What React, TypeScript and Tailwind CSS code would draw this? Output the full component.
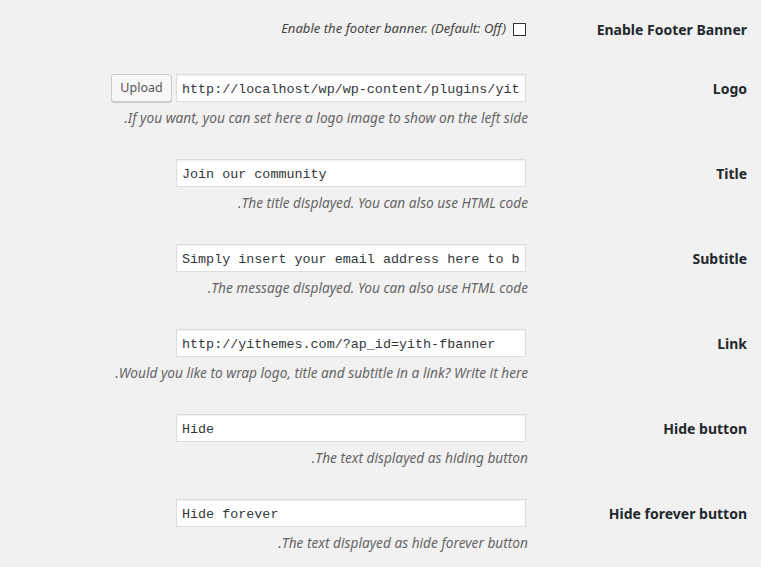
import React from "react";

const labelFont = { fontFamily: '"Noto Sans", "Open Sans", sans-serif' };

function Row({
  label,
  children,
  desc,
}: {
  label: string;
  children: React.ReactNode;
  desc?: string;
}) {
  return (
    <div className="flex h-[85px]">
      <div className="flex-1 flex flex-col items-end pt-[15px] pr-[35px]">
        {children}
        {desc && (
          <p
            dir="rtl"
            className="mt-[4px] mr-[-2px] leading-[24px] text-[13.7px] italic text-[#666] text-right"
            style={labelFont}
          >
            {desc}
          </p>
        )}
      </div>
      <div
        className="w-[200px] pt-[19px] pr-[14px] text-right text-[14px] font-bold leading-[22px] text-[#23282d]"
        style={labelFont}
      >
        {label}
      </div>
    </div>
  );
}

function TextInput({ value }: { value: string }) {
  return (
    <input
      dir="ltr"
      readOnly
      value={value}
      className="w-[350px] h-[28px] bg-white border border-[#dddddd] shadow-[inset_0_1px_2px_rgba(0,0,0,0.07)] pl-[5px] pr-[5px] pt-[2px] text-[13.4px] text-[#32373c] outline-none"
      style={{ fontFamily: '"Liberation Mono", "DejaVu Sans Mono", monospace' }}
    />
  );
}

export default function App() {
  return (
    <div className="w-[761px] h-[567px] bg-[#f1f1f1] overflow-hidden">
      <div className="flex h-[59px]">
        <div className="flex-1 flex items-start justify-end pt-[15px] pr-[35px]">
          <div className="flex items-center h-[28px] gap-[7px]">
            <span
              className="text-[13.1px] italic text-[#444]"
              style={labelFont}
            >
              Enable the footer banner. (Default: Off)
            </span>
            <span className="block w-[13px] h-[13px] border border-[#333] bg-white" />
          </div>
        </div>
        <div
          className="w-[200px] pt-[19px] pr-[14px] text-right text-[14px] font-bold leading-[22px] text-[#23282d]"
          style={labelFont}
        >
          Enable Footer Banner
        </div>
      </div>

      <Row
        label="Logo"
        desc="If you want, you can set here a logo image to show on the left side."
      >
        <div className="flex items-center gap-[4px]">
          <button
            className="w-[61px] h-[28px] px-0 bg-[#f7f7f7] border border-[#cccccc] rounded-[3px] shadow-[0_1px_0_#cccccc] text-[12.5px] text-[#555]"
            style={labelFont}
          >
            Upload
          </button>
          <TextInput value="http://localhost/wp/wp-content/plugins/yith-footer-banner/assets/images/logo.png" />
        </div>
      </Row>

      <Row label="Title" desc="The title displayed. You can also use HTML code.">
        <TextInput value="Join our community" />
      </Row>

      <Row
        label="Subtitle"
        desc="The message displayed. You can also use HTML code."
      >
        <TextInput value="Simply insert your email address here to be always updated" />
      </Row>

      <Row
        label="Link"
        desc="Would you like to wrap logo, title and subtitle in a link? Write it here."
      >
        <TextInput value="http://yithemes.com/?ap_id=yith-fbanner" />
      </Row>

      <Row label="Hide button" desc="The text displayed as hiding button.">
        <TextInput value="Hide" />
      </Row>

      <Row
        label="Hide forever button"
        desc="The text displayed as hide forever button."
      >
        <TextInput value="Hide forever" />
      </Row>
    </div>
  );
}
